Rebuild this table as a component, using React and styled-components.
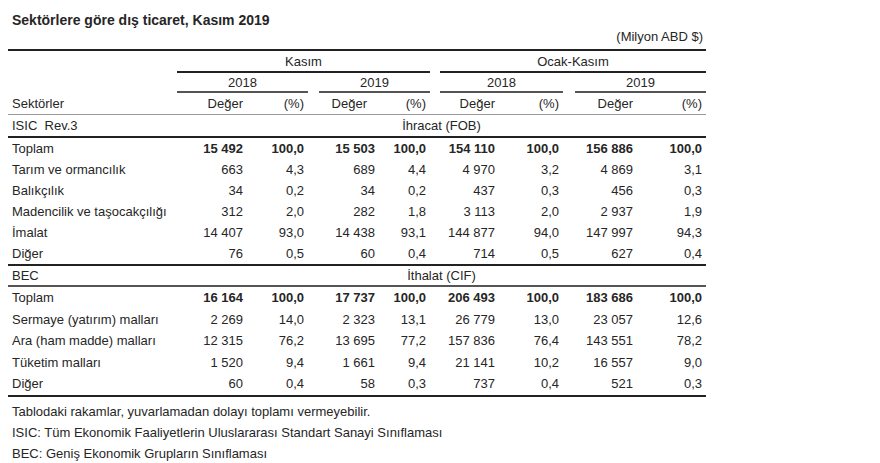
import React from "react";
import styled, { createGlobalStyle } from "styled-components";

const Global = createGlobalStyle`
  html, body { margin: 0; padding: 0; background: #fff; }
  body {
    font-family: "Liberation Sans", Arial, sans-serif;
    color: #262626;
    font-size: 13px;
  }
`;

const COLS = "169px 70px 61px 71px 51px 69px 64px 74px 69px";

const Page = styled.div`
  width: 698px;
  padding-left: 8px;
`;

const Title = styled.div`
  padding: 12px 0 0 4px;
  font-size: 14px;
  font-weight: bold;
  line-height: 16px;
`;

const Unit = styled.div`
  margin-top: 2px;
  text-align: right;
  padding-right: 3px;
  line-height: 14px;
  height: 14px;
`;

const Table = styled.div`
  margin-top: 5px;
  border-top: 2px solid #222;
`;

const Row = styled.div`
  display: grid;
  grid-template-columns: ${COLS};
  align-items: center;
  height: ${(p) => p.$h}px;
  box-sizing: border-box;
  border-bottom: ${(p) => (p.$line ? p.$line : "none")};
`;

const Label = styled.div`
  padding-left: 4px;
  white-space: nowrap;
`;

const Num = styled.div`
  text-align: right;
  padding-right: ${(p) => (p.$pr != null ? p.$pr : 4)}px;
  font-weight: ${(p) => (p.$bold ? "bold" : "normal")};
  white-space: nowrap;
`;

const Group = styled.div`
  grid-column: ${(p) => p.$span};
  margin-left: ${(p) => p.$ml || 0}px;
  align-self: stretch;
  display: flex;
  align-items: center;
  justify-content: center;
  border-bottom: ${(p) => p.$line};
  box-sizing: border-box;
`;

const Section = styled.div`
  grid-column: 2 / 10;
  text-align: center;
`;

const Notes = styled.div`
  margin-top: 4px;
  padding-left: 4px;
  line-height: 21px;
`;

const export1 = [
  ["Toplam", ["15 492", "100,0", "15 503", "100,0", "154 110", "100,0", "156 886", "100,0"], true],
  ["Tarım ve ormancılık", ["663", "4,3", "689", "4,4", "4 970", "3,2", "4 869", "3,1"]],
  ["Balıkçılık", ["34", "0,2", "34", "0,2", "437", "0,3", "456", "0,3"]],
  ["Madencilik ve taşocakçılığı", ["312", "2,0", "282", "1,8", "3 113", "2,0", "2 937", "1,9"]],
  ["İmalat", ["14 407", "93,0", "14 438", "93,1", "144 877", "94,0", "147 997", "94,3"]],
  ["Diğer", ["76", "0,5", "60", "0,4", "714", "0,5", "627", "0,4"]],
];

const import1 = [
  ["Toplam", ["16 164", "100,0", "17 737", "100,0", "206 493", "100,0", "183 686", "100,0"], true],
  ["Sermaye (yatırım) malları", ["2 269", "14,0", "2 323", "13,1", "26 779", "13,0", "23 057", "12,6"]],
  ["Ara (ham madde) malları", ["12 315", "76,2", "13 695", "77,2", "157 836", "76,4", "143 551", "78,2"]],
  ["Tüketim malları", ["1 520", "9,4", "1 661", "9,4", "21 141", "10,2", "16 557", "9,0"]],
  ["Diğer", ["60", "0,4", "58", "0,3", "737", "0,4", "521", "0,3"]],
];

const DARK = "2px solid #222";
const MID = "2px solid #555";
const THIN = "1px solid #999";

function DataRows({ rows, h, lastLine }) {
  return rows.map(([label, vals, bold], i) => (
    <Row key={label + i} $h={i === rows.length - 1 ? h + 2 : h} $line={i === rows.length - 1 ? lastLine : null}>
      <Label>{label}</Label>
      {vals.map((v, j) => (
        <Num key={j} $bold={bold}>
          {v.replace(/ /g, "\u00a0")}
        </Num>
      ))}
    </Row>
  ));
}

export default function App() {
  return (
    <>
      <Global />
      <Page>
        <Title>Sektörlere göre dış ticaret, Kasım 2019</Title>
        <Unit>(Milyon ABD $)</Unit>
        <Table>
          <Row $h={22}>
            <Label />
            <Group $span="2 / 6" $line={DARK}>Kasım</Group>
            <Group $span="6 / 10" $ml={10} $line={DARK}>Ocak-Kasım</Group>
          </Row>
          <Row $h={20}>
            <Label />
            <Group $span="2 / 4" $line={MID}>2018</Group>
            <Group $span="4 / 6" $ml={11} $line={MID}>2019</Group>
            <Group $span="6 / 8" $ml={10} $line={MID}>2018</Group>
            <Group $span="8 / 10" $ml={12} $line={MID}>2019</Group>
          </Row>
          <Row $h={22} $line={THIN}>
            <Label>Sektörler</Label>
            <Num>Değer</Num>
            <Num>(%)</Num>
            <Num $pr={12}>Değer</Num>
            <Num>(%)</Num>
            <Num>Değer</Num>
            <Num>(%)</Num>
            <Num>Değer</Num>
            <Num>(%)</Num>
          </Row>
          <Row $h={23} $line={DARK}>
            <Label>ISIC{"\u00a0"} Rev.3</Label>
            <Section>İhracat (FOB)</Section>
          </Row>
          <DataRows rows={export1} h={21} lastLine={DARK} />
          <Row $h={21} $line={MID}>
            <Label>BEC</Label>
            <Section>İthalat (CIF)</Section>
          </Row>
          <DataRows rows={import1} h={21.5} lastLine={DARK} />
        </Table>
        <Notes>
          <div>Tablodaki rakamlar, yuvarlamadan dolayı toplamı vermeyebilir.</div>
          <div>ISIC: Tüm Ekonomik Faaliyetlerin Uluslararası Standart Sanayi Sınıflaması</div>
          <div>BEC: Geniş Ekonomik Grupların Sınıflaması</div>
        </Notes>
      </Page>
    </>
  );
}
